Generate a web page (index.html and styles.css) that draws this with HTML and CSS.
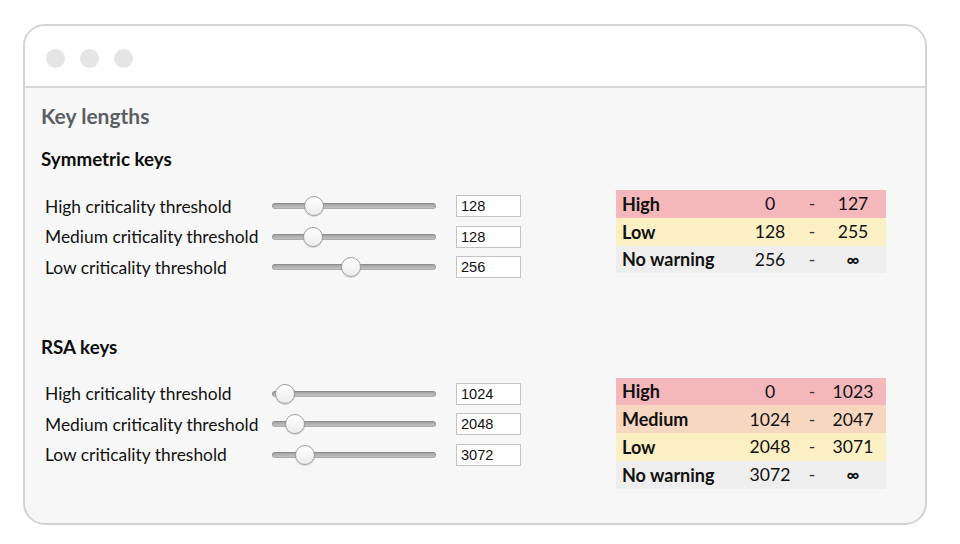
FILE: index.html
```html
<!DOCTYPE html>
<html>
<head>
<meta charset="utf-8">
<link rel="stylesheet" href="styles.css">
</head>
<body>
<div class="window">
  <div class="titlebar">
    <span class="dot"></span><span class="dot"></span><span class="dot"></span>
  </div>
  <div class="content">
    <h1 class="title">Key lengths</h1>

    <section class="group">
      <h2 class="group-title">Symmetric keys</h2>
      <div class="group-body">
        <div class="controls">
          <div class="row">
            <span class="label">High criticality threshold</span>
            <div class="slider"><span class="thumb" style="left:42px"></span></div>
            <span class="field">128</span>
          </div>
          <div class="row">
            <span class="label">Medium criticality threshold</span>
            <div class="slider"><span class="thumb" style="left:41px"></span></div>
            <span class="field">128</span>
          </div>
          <div class="row">
            <span class="label">Low criticality threshold</span>
            <div class="slider"><span class="thumb" style="left:79px"></span></div>
            <span class="field">256</span>
          </div>
        </div>
        <div class="levels">
          <div class="lvl high"><span class="name">High</span><span class="num">0</span><span class="dash">-</span><span class="num">127</span></div>
          <div class="lvl low"><span class="name">Low</span><span class="num">128</span><span class="dash">-</span><span class="num">255</span></div>
          <div class="lvl none"><span class="name">No warning</span><span class="num">256</span><span class="dash">-</span><span class="num inf">∞</span></div>
        </div>
      </div>
    </section>

    <section class="group">
      <h2 class="group-title">RSA keys</h2>
      <div class="group-body">
        <div class="controls">
          <div class="row">
            <span class="label">High criticality threshold</span>
            <div class="slider"><span class="thumb" style="left:13px"></span></div>
            <span class="field">1024</span>
          </div>
          <div class="row">
            <span class="label">Medium criticality threshold</span>
            <div class="slider"><span class="thumb" style="left:23px"></span></div>
            <span class="field">2048</span>
          </div>
          <div class="row">
            <span class="label">Low criticality threshold</span>
            <div class="slider"><span class="thumb" style="left:33px"></span></div>
            <span class="field">3072</span>
          </div>
        </div>
        <div class="levels">
          <div class="lvl high"><span class="name">High</span><span class="num">0</span><span class="dash">-</span><span class="num">1023</span></div>
          <div class="lvl medium"><span class="name">Medium</span><span class="num">1024</span><span class="dash">-</span><span class="num">2047</span></div>
          <div class="lvl low"><span class="name">Low</span><span class="num">2048</span><span class="dash">-</span><span class="num">3071</span></div>
          <div class="lvl none"><span class="name">No warning</span><span class="num">3072</span><span class="dash">-</span><span class="num inf">∞</span></div>
        </div>
      </div>
    </section>
  </div>
</div>
</body>
</html>
```

FILE: styles.css
```css
* { box-sizing: border-box; }

html, body {
  margin: 0;
  padding: 0;
  background: #ffffff;
}

body {
  font-family: Lato, "Open Sans", sans-serif;
  color: #111;
  padding: 24px 0 0 23px;
}

.window {
  width: 904px;
  height: 501px;
  border: 2px solid #d3d3d3;
  border-radius: 22px;
  overflow: hidden;
  background: #f7f7f7;
}

.titlebar {
  height: 62px;
  background: #ffffff;
  border-bottom: 2px solid #d6d6d6;
  display: flex;
  align-items: center;
  gap: 15px;
  padding: 4px 0 0 21px;
}

.dot {
  width: 19px;
  height: 19px;
  border-radius: 50%;
  background: #e5e5e5;
}

.content {
  padding: 16px 0 0 16px;
}

.title {
  margin: 0;
  font-size: 21px;
  line-height: 24px;
  font-weight: 700;
  color: #5a5f66;
}

.group { margin-top: 20px; }
.group + .group { margin-top: 53px; }

.group-title {
  margin: 0;
  font-size: 18.8px;
  line-height: 22px;
  font-weight: 700;
  color: #0d0d0d;
}

.group-body {
  display: flex;
  align-items: flex-start;
  margin-top: 20px;
}

.controls {
  display: flex;
  flex-direction: column;
  padding: 1px 0 0 4px;
  width: 575px;
}

.row {
  display: flex;
  align-items: center;
  height: 30.5px;
}

.label {
  width: 227px;
  font-size: 17.4px;
  color: #111;
}

.slider {
  position: relative;
  width: 164px;
  height: 6px;
  border-radius: 3px;
  background: linear-gradient(#9c9c9c, #c9c9c9);
  box-shadow: inset 0 0 0 1px rgba(0,0,0,0.12);
}

.thumb {
  position: absolute;
  top: 50%;
  width: 20px;
  height: 20px;
  margin: -10px 0 0 -10px;
  border-radius: 50%;
  background: linear-gradient(#ffffff, #ececec);
  border: 1px solid #9f9f9f;
  box-shadow: 0 1px 1px rgba(0,0,0,0.15);
}

.field {
  margin-left: 20px;
  width: 65px;
  height: 22px;
  background: #fff;
  border: 1px solid #c4c4c4;
  padding: 0 4px;
  font-family: "Liberation Sans", Arial, sans-serif;
  font-size: 14.6px;
  line-height: 21px;
  color: #111;
}

.levels {
  display: flex;
  flex-direction: column;
  width: 270px;
}

.lvl {
  display: grid;
  grid-template-columns: 124px 60px 24px 58px;
  align-items: center;
  height: 27.75px;
  font-size: 17.6px;
  color: #111;
}

.lvl .name {
  padding-left: 6px;
  font-weight: 700;
  font-size: 18px;
}

.lvl .num, .lvl .dash { text-align: center; }
.lvl .dash { color: #333; }
.lvl .inf { font-weight: 700; }

.high { background: #f4b7bc; }
.medium { background: #f8d7c0; }
.low { background: #fbf0c4; }
.none { background: #eeeeee; }
```
